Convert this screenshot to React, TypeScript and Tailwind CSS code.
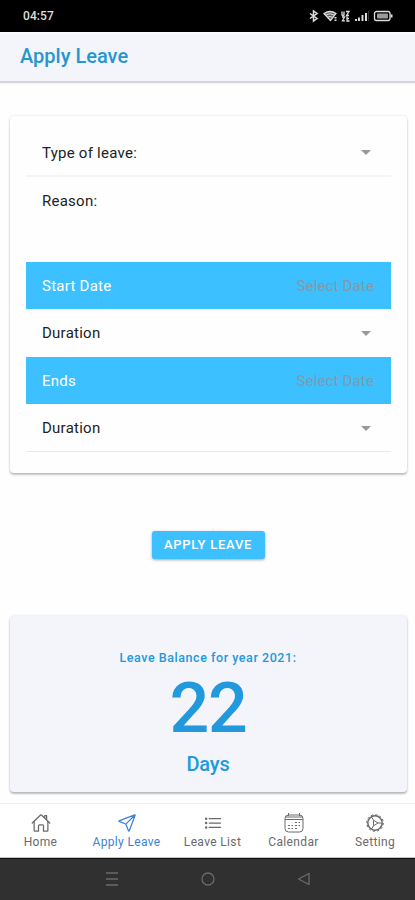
import React from "react";
import {
  IoHomeOutline,
  IoPaperPlaneOutline,
  IoListOutline,
} from "react-icons/io5";

function StatusBar() {
  return (
    <div className="flex h-8 shrink-0 items-center justify-between bg-black pl-[23px] pr-[22px] text-[#dedede]">
      <span className="text-[12px] font-medium tracking-[0.1px]">04:57</span>
      <svg width="84" height="14" viewBox="0 0 84 14" fill="none" stroke="currentColor">
        <path d="M1 4.500l7 5-3.500 2.500V2L8 4.500l-7 5" strokeWidth="1.500" />
        <path d="M15 4.500q6-4 12 0l-5.500 7z" fill="currentColor" fillOpacity=".45" strokeWidth="1.300" />
        <path d="M17 6q4-2.500 8 0M19 8q2-1 4 0" strokeWidth="1" />
        <path d="M26.500 8v4" strokeWidth="2" strokeDasharray="1.500 1" />
        <path d="M33 2.500v3.500l1 .5 1-.5V2.500M37 2.500h3l-2.500 4h2.500M33 8h2.500l-2 3.800h2.500M38 7.500v4.500h2.500M38 9.500h2" strokeWidth="1.300" />
        <path d="M47 10v2M50 8.500v3.500M53.500 6v6" strokeWidth="1.900" />
        <path d="M57 4v8" strokeWidth="2" />
        <path d="M59.500 2v10" stroke="#333" strokeWidth="1" />
        <rect x="65.500" y="2.500" width="15.500" height="9" rx="2" strokeWidth="1.300" />
        <rect x="68" y="4.500" width="11" height="5" rx="1" fill="#999" stroke="none" />
        <path d="M82.500 5.500v3" strokeWidth="2" />
      </svg>
    </div>
  );
}

function SelectRow({ label, border }: { label: string; border: string }) {
  return (
    <div className={`flex h-12 items-center justify-between pl-4 pr-5 ${border}`}>
      <span>{label}</span>
      <svg width="10" height="5" viewBox="0 0 10 5" fill="#999">
        <path d="M0 0h10L5 5z" />
      </svg>
    </div>
  );
}

function DateRow({ label }: { label: string }) {
  return (
    <div className="flex h-[47px] items-center justify-between bg-[#3dc0ff] pl-4 pr-[17px]">
      <span className="text-white">{label}</span>
      <span className="tracking-[0.15px] text-[#8299a8]">Select Date</span>
    </div>
  );
}

function CalendarIcon() {
  return (
    <svg width="20" height="20" viewBox="0 0 20 20" fill="none" stroke="currentColor">
      <rect x="1" y="2" width="18" height="17" rx="3.500" />
      <path d="M1 4h18M1 6.500h18M4.500 0v3M15.500 0v3" />
      <path d="M11 9.500h2M14.500 9.500H16M4 12.500h2M7.500 12.500H9M11 12.500h2M14.500 12.500H16M4 15.500h2M7.500 15.500H9M11 15.500h2" />
    </svg>
  );
}

function GearIcon() {
  return (
    <svg width="20" height="20" viewBox="0 0 20 20" fill="none" stroke="currentColor">
      <circle cx="10" cy="10" r="7.200" strokeWidth="1.500" />
      <circle cx="10" cy="10" r="8.300" strokeWidth="1" strokeDasharray="2.200 2.145" />
      <path d="M8.500 7.200L13 10l-4.500 2.800z" strokeWidth="1" strokeLinejoin="round" />
      <path d="M13 10h4M8.500 7.200L6.500 4M8.500 12.800L6.500 16" strokeWidth="1" />
    </svg>
  );
}

const tabs = [
  { label: "Home", Icon: IoHomeOutline, width: "w-[81px]" },
  { label: "Apply Leave", Icon: IoPaperPlaneOutline, width: "w-[91px]", active: true },
  { label: "Leave List", Icon: IoListOutline, width: "w-[81px]" },
  { label: "Calendar", Icon: CalendarIcon, width: "w-[81px]" },
  { label: "Setting", Icon: GearIcon, width: "w-[82px]" },
];

export default function App() {
  return (
    <div className="flex h-[900px] w-[415px] flex-col overflow-hidden bg-[#fefefe] font-[Roboto,sans-serif] text-[#222]">
      <StatusBar />
      <header className="flex h-[51px] shrink-0 items-center border-b-2 border-t-2 border-b-[#d3d5d8] border-t-[#fafbfc] bg-[#f3f5fa] pb-[3px] pl-5 shadow-[0_1px_2px_rgba(0,0,0,0.06)]">
        <h1 className="text-[20px] font-medium leading-6 text-[#2796cf]">Apply Leave</h1>
      </header>

      <main className="flex flex-1 flex-col items-center pl-[10px] pr-2 pt-[33px]">
        <section className="h-[357px] w-full rounded-[4px] bg-[#fefefe] px-4 pt-[13px] text-[15px] leading-5 tracking-[0.25px] shadow-[0_2px_2px_rgba(0,0,0,0.22),0_0_3px_rgba(0,0,0,0.12)]">
          <SelectRow label="Type of leave:" border="border-b-2 border-[#f4f4f4] pt-px" />
          <div className="h-[85px] pl-4 pt-[14px]">Reason:</div>
          <DateRow label="Start Date" />
          <SelectRow label="Duration" border="" />
          <DateRow label="Ends" />
          <SelectRow label="Duration" border="border-b border-[#e9e9e9] pt-px" />
        </section>

        <button className="mt-[58px] h-7 w-[113px] rounded-[3px] bg-[#3dc0ff] pr-px text-[13px] font-medium leading-[26px] tracking-[0.75px] text-white shadow-[0_1px_3px_rgba(0,0,0,0.35)]">
          APPLY LEAVE
        </button>

        <section className="mt-[57px] flex h-[176px] w-full flex-col items-center rounded-[4px] bg-[#f3f5fa] pr-px pt-[34px] font-medium text-[#2299dc] shadow-[0_2px_2px_rgba(0,0,0,0.24),0_0_3px_rgba(0,0,0,0.13)]">
          <p className="text-[12.5px] leading-4 tracking-[0.55px]">Leave Balance for year 2021:</p>
          <p className="mt-1 text-[70px] leading-[76px] tracking-[-1.2px]">22</p>
          <p className="mt-[6px] text-[20px] leading-6 tracking-[-0.2px]">Days</p>
        </section>
      </main>

      <nav className="flex h-[55px] shrink-0 border-b border-t border-b-[#c4c4c4] border-t-[#f1f1f1] bg-white">
        {tabs.map(({ label, Icon, active, width }) => (
          <div
            key={label}
            className={`flex shrink-0 flex-col items-center pt-[9px] ${width} ${
              active ? "text-[#3b82d9]" : "text-[#6a6a6a]"
            }`}
          >
            <Icon className="size-5" />
            <span className="mt-px whitespace-nowrap text-[12px] leading-4 tracking-[0.35px]">{label}</span>
          </div>
        ))}
      </nav>

      <div className="flex h-[42px] shrink-0 items-center justify-center gap-[82px] border-t border-[#111] bg-[#303030] pb-px text-[#6a6a6a]">
        <svg width="14" height="14" viewBox="0 0 14 14" stroke="currentColor" strokeWidth="1.300">
          <path d="M1 1h12M1 7h12M1 13h12" />
        </svg>
        <svg width="14" height="14" viewBox="0 0 14 14" fill="none" stroke="currentColor" strokeWidth="1.300">
          <circle cx="7" cy="7" r="6" />
        </svg>
        <svg width="14" height="14" viewBox="0 0 14 14" fill="none" stroke="currentColor" strokeWidth="1.300">
          <path d="M12 1.500v11L1.500 7z" strokeLinejoin="round" />
        </svg>
      </div>
    </div>
  );
}
